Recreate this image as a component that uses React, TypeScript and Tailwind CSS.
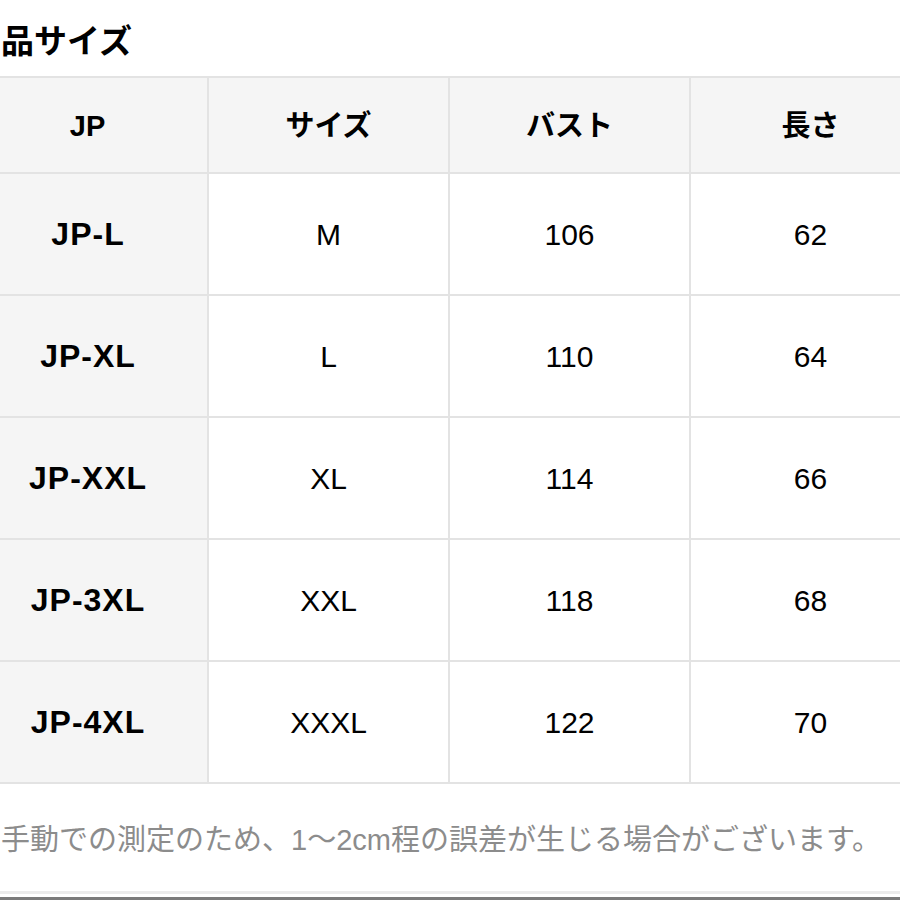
import React from 'react';

interface SizeRow {
  jp: string;
  size: string;
  bust: number;
  length: number;
}

const rows: SizeRow[] = [
  { jp: 'JP-L', size: 'M', bust: 106, length: 62 },
  { jp: 'JP-XL', size: 'L', bust: 110, length: 64 },
  { jp: 'JP-XXL', size: 'XL', bust: 114, length: 66 },
  { jp: 'JP-3XL', size: 'XXL', bust: 118, length: 68 },
  { jp: 'JP-4XL', size: 'XXXL', bust: 122, length: 70 },
];

const headers = ['JP', 'サイズ', 'バスト', '長さ'];

const App: React.FC = () => {
  return (
    <div
      className="w-[900px] h-[900px] overflow-hidden bg-white text-black flex flex-col"
      style={{ fontFamily: '"Liberation Sans", "Noto Sans CJK JP", sans-serif' }}
    >
      {/* Title */}
      <div className="pt-[21px] pl-[1px] h-[76px] text-[33px] font-bold leading-[42px]">
        品サイズ
      </div>

      {/* Size table */}
      <table className="ml-[-34px] w-[966px] border-collapse table-fixed shrink-0">
        <thead>
          <tr className="h-[96px] bg-[#f5f5f5]">
            {headers.map((h) => (
              <th
                key={h}
                className="border-2 border-[#e3e3e3] pt-[4px] text-[29px] font-bold text-center align-middle"
              >
                {h}
              </th>
            ))}
          </tr>
        </thead>
        <tbody>
          {rows.map((r) => (
            <tr key={r.jp} className="h-[122px]">
              <td className="border-2 border-[#e3e3e3] bg-[#f5f5f5] pl-[1px] text-[32px] font-bold tracking-[1px] text-center">
                {r.jp}
              </td>
              <td className="border-2 border-[#e3e3e3] text-[30px] text-center">{r.size}</td>
              <td className="border-2 border-[#e3e3e3] text-[30px] text-center">{r.bust}</td>
              <td className="border-2 border-[#e3e3e3] text-[30px] text-center">{r.length}</td>
            </tr>
          ))}
        </tbody>
      </table>

      {/* Note */}
      <div className="flex-1 flex flex-col">
        <p className="pt-[36px] pl-[1px] text-[29px] leading-[40px] text-[#8c8c8c] whitespace-nowrap">
          手動での測定のため、1〜2cm程の誤差が生じる場合がございます。
        </p>
        <div className="mt-auto h-[3px] bg-[#ebebeb]" />
        <div className="mt-[3px] h-[3px] bg-[#7a7a7a]" />
      </div>
    </div>
  );
};

export default App;
